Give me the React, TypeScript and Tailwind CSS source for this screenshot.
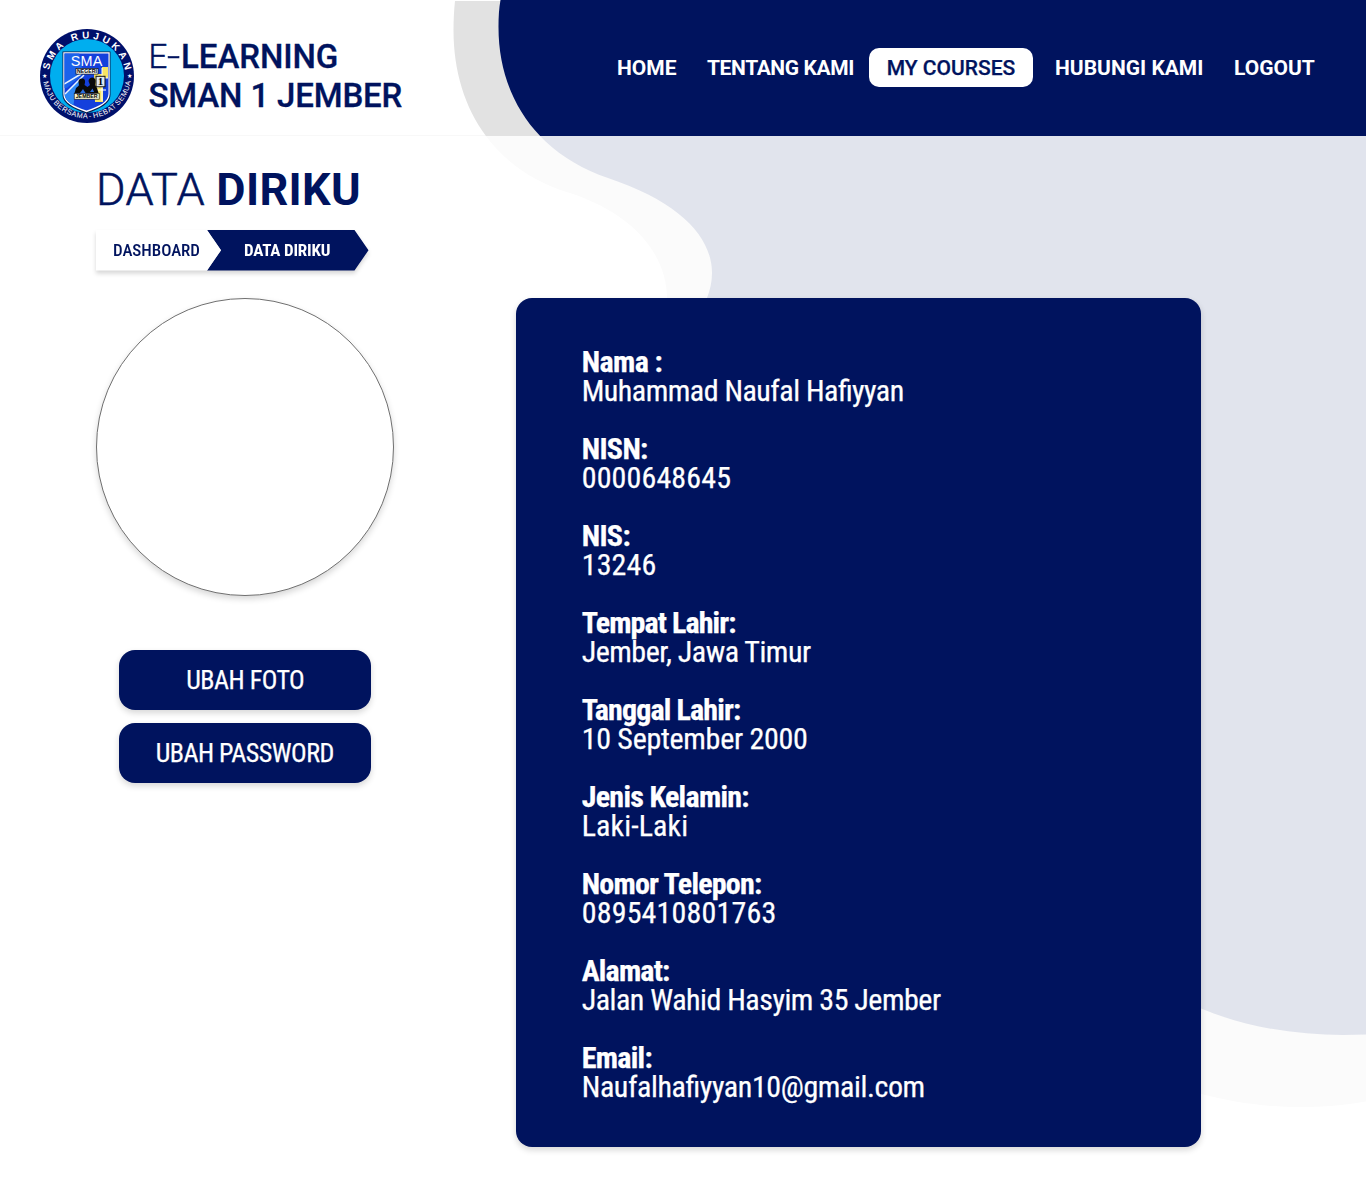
import React from "react";

const NAVY = "#00135e";

function Logo() {
  return (
    <svg className="block h-24 w-24 shrink-0" viewBox="0 0 96 96">
      <defs>
        <path id="ringTop" d="M 9.500 49 A 38.5 38.5 0 0 1 86.5 49" />
        <path id="ringBottom" d="M 3.6 46 A 44.4 44.4 0 0 0 92.4 46" />
        <clipPath id="shieldClip">
          <path d="M25.5 25.5 H69.5 V65.500 C69.5 74 60 78.500 47.500 82.500 C35 78.500 25.5 74 25.5 65.500 Z" />
        </clipPath>
      </defs>
      <circle cx="48" cy="48" r="47" fill="#00106b" />
      <circle cx="48" cy="48" r="37" fill="#00aeef" />
      <path d="M23.500 23.500 H71.500 V66.500 C71.500 76 61 80.500 47.500 85.500 C34 80.500 23.500 76 23.500 66.500 Z" fill="#0b1a4a" />
      <path d="M24.300 24.300 H70.700 V66 C70.700 75 60 79.800 47.500 84.300 C35 79.800 24.300 75 24.300 66 Z" fill="#fff" />
      <g clipPath="url(#shieldClip)">
        <rect x="24" y="24" width="48" height="62" fill="#1440dc" />
        <path d="M24 24 H40 L44 46 L28 60 H24 Z" fill="#1b62ea" />
        <path d="M24 68 L44 47 L36 66 L34 80 Z" fill="#2b86f5" />
        <path d="M25 56 L42 46 M26 66 L45 47" stroke="#e8f2ff" strokeWidth="1.500" />
        <path d="M55 46 H63 V39 H69 V50 H64 V74 H56 Z" fill="#f7e463" />
        <path d="M59 47 V60 M63 40 V73 M56 50 H69 M56 62 H67" stroke="#fff" strokeWidth="1" />
      </g>
      <text x="47.500" y="38" textAnchor="middle" fontSize="14.400" fill="#fff" fontFamily="Liberation Sans" textLength="31.500">SMA</text>
      <rect x="37" y="40.500" width="22" height="5.600" fill="#fff" stroke="#111" strokeWidth=".7" />
      <text x="48" y="45.200" textAnchor="middle" fontSize="5" fontWeight="700" fontFamily="Liberation Sans" textLength="20" lengthAdjust="spacingAndGlyphs">NEGERI</text>
      <rect x="57" y="48.300" width="9" height="10.500" fill="#dfe7ee" stroke="#111" strokeWidth="1" />
      <text x="61.500" y="57.300" textAnchor="middle" fontSize="11" fontWeight="700" fontFamily="Liberation Serif">1</text>
      <path d="M35.500 65 L37 60 L40 57.500 L39.500 54 Q39.500 50.500 43 50.500 Q46.500 50.500 46 54.500 L45.500 57 L48.500 59 L51 57 L49.500 53 Q50 49.500 53.500 49.500 Q57 50 56.500 54 L56 57 L58 60 L59.500 65 Z" fill="#0a0a0a" />
      <path d="M41 65 L44 61 L46.500 65 Z M51 64 L53.500 60.500 L55 64 Z" fill="#2b6fe0" />
      <rect x="35.200" y="65.600" width="25" height="5.600" fill="#f6f3cf" stroke="#111" strokeWidth=".6" />
      <text x="47.700" y="70.200" textAnchor="middle" fontSize="4.800" fontWeight="700" fontFamily="Liberation Sans" textLength="22" lengthAdjust="spacingAndGlyphs">JEMBER</text>
      <text fill="#fff" fontSize="9.800" fontWeight="700" fontFamily="Liberation Sans">
        <textPath href="#ringTop" startOffset="7" textLength="107">SMA RUJUKAN</textPath>
      </text>
      <text fill="#fff" fontSize="7.300" fontFamily="Liberation Sans" wordSpacing="-1">
        <textPath href="#ringBottom" startOffset="8" textLength="124">MAJU BERSAMA - HEBAT SEMUA</textPath>
      </text>
      <text x="3" y="49.500" fontSize="6" fill="#fff" fontFamily="DejaVu Sans">★</text>
      <text x="88" y="49.500" fontSize="6" fill="#fff" fontFamily="DejaVu Sans">★</text>
    </svg>
  );
}

const darkPath =
  "M500.500 0 C499 8 498.500 17 498.500 27 C498.500 100 540 155 608 178 C680 202 712 237 712 273 C712 282 710 290 707 298 V700 L1201 1008.500 C1245 1027 1295 1035 1343 1035 L1366 1034.500 V0 Z";
const lightPath =
  "M455 1 C454 10 453.500 20 453.500 30 C453.500 110 496 171 570 193 C640 216 667 260 667 298 V800 L1201 1094 C1232 1102 1265 1107 1300 1107 Q1335 1107 1366 1101.500 V1 Z";

function Waves({ light, dark }: { light: string; dark: string }) {
  return (
    <svg className="absolute left-0 top-0 -z-10" width="1366" height="1195" viewBox="0 0 1366 1195">
      <path d={lightPath} fill={light} />
      <path d={darkPath} fill={dark} />
    </svg>
  );
}

const fields = [
  { label: "Nama :", labelClass: "tracking-[-0.6px]", value: "Muhammad Naufal Hafiyyan", valueClass: "tracking-[-0.51px]" },
  { label: "NISN:", labelClass: "tracking-[-0.65px]", value: "0000648645", valueClass: "tracking-[0.13px]" },
  { label: "NIS:", labelClass: "tracking-[-0.65px]", value: "13246", valueClass: "tracking-[0.13px]" },
  { label: "Tempat Lahir:", labelClass: "tracking-[-0.9px]", value: "Jember, Jawa Timur", valueClass: "tracking-[-0.5px]" },
  { label: "Tanggal Lahir:", labelClass: "tracking-[-0.84px]", value: "10 September 2000", valueClass: "tracking-[-0.28px]" },
  { label: "Jenis Kelamin:", labelClass: "tracking-[-0.7px]", value: "Laki-Laki", valueClass: "tracking-[0.1px]" },
  { label: "Nomor Telepon:", labelClass: "tracking-[-0.76px]", value: "0895410801763", valueClass: "tracking-[0.17px]" },
  { label: "Alamat:", labelClass: "tracking-[-0.8px]", value: "Jalan Wahid Hasyim 35 Jember", valueClass: "tracking-[-0.49px]" },
  { label: "Email:", labelClass: "tracking-[-0.7px]", value: "Naufalhafiyyan10@gmail.com", valueClass: "tracking-[-0.4px]" },
];

export default function App() {
  return (
    <div className="relative isolate h-[1195px] w-[1366px] overflow-hidden bg-white font-['Roboto'] text-[#00135e]">
      <Waves light="#fbfbfb" dark="#e1e4ed" />
      <header className="relative isolate flex h-[136px] items-start overflow-hidden bg-white pl-[39px] pt-7">
        <div className="absolute inset-x-0 bottom-0 -z-20 h-px bg-[#f8f8f8]" />
        <Waves light="#e2e2e2" dark={NAVY} />
        <Logo />
        <div className="ml-[13.5px] mt-[9px] w-[468.5px] whitespace-nowrap text-[33px] font-medium leading-[39px] tracking-[-0.08px] [-webkit-text-stroke:0.3px]">
          <div className="flex">
            <span className="font-light [-webkit-text-stroke:0.5px]">E</span>
            <span className="mr-[4.5px] origin-left scale-x-[1.4] font-light [-webkit-text-stroke:0.5px]">-</span>
            <span>LEARNING</span>
          </div>
          <div className="tracking-[-0.15px]">SMAN 1 JEMBER</div>
        </div>
        <nav className="mt-5 flex h-[39px] items-center whitespace-nowrap pt-0.5 text-[21px] font-bold text-white">
          <a className="w-[90px]">HOME</a>
          <a className="w-[162px] tracking-[-0.4px]">TENTANG KAMI</a>
          <a className="-mt-0.5 flex h-[39px] w-[164px] items-center justify-center rounded-[10px] bg-white pt-0.5 font-medium text-[#00135e] [-webkit-text-stroke:0.25px]">MY COURSES</a>
          <a className="ml-[22px] w-[179px]">HUBUNGI KAMI</a>
          <a>LOGOUT</a>
        </nav>
      </header>
      <main className="flex pl-24">
        <section className="w-[420px]">
          <h1 className="mt-[27px] h-[67px] whitespace-nowrap text-[45px] font-light leading-[53px] tracking-[0.35px] [-webkit-text-stroke:0.6px]">DATA <b className="font-bold [-webkit-text-stroke:0px]">DIRIKU</b></h1>
          <div className="flex h-[40.5px] text-[17px] font-medium tracking-[-0.05px] drop-shadow-[0_3px_2px_rgba(0,0,0,0.16)] [font-stretch:75%]">
            <div className="z-10 flex w-[125px] items-center bg-white pl-[17px] [clip-path:polygon(0_0,111px_0,125px_50%,111px_100%,0_100%)]">DASHBOARD</div>
            <div className="-ml-[14px] flex w-[161.5px] items-center bg-[#00135e] pl-[37px] font-bold tracking-[-0.18px] text-white [clip-path:polygon(0_0,147.5px_0,100%_50%,147.5px_100%,0_100%,14px_50%)]">DATA DIRIKU</div>
          </div>
          <div className="mt-[27.5px] h-[298px] w-[298px] rounded-full border border-[#707070] bg-white shadow-[0_3px_6px_rgba(0,0,0,0.16)]" />
          <div className="ml-[23px] mt-[54px] flex w-[251.500px] flex-col gap-[13px] text-[26px] tracking-[-0.5px] text-white [-webkit-text-stroke:0.25px] [font-stretch:75%]">
            <button className="h-[60px] rounded-2xl bg-[#00135e] pl-px pt-px shadow-[0_3px_6px_rgba(0,0,0,0.16)]">UBAH FOTO</button>
            <button className="h-[60px] rounded-2xl bg-[#00135e] pt-px shadow-[0_3px_6px_rgba(0,0,0,0.16)]">UBAH PASSWORD</button>
          </div>
        </section>
        <section className="mt-[162px] h-[849px] w-[684.500px] rounded-2xl bg-[#00135e] pl-[65.7px] pt-[49px] text-[30px] leading-[29px] text-white shadow-[0_3px_6px_rgba(0,0,0,0.16)] [-webkit-text-stroke:0.25px] [font-feature-settings:'liga'_1] [font-stretch:75%]">
          {fields.map((field) => (
            <div key={field.label} className="mb-[29px]">
              <div className={`font-bold ${field.labelClass}`}>{field.label}</div>
              <div className={field.valueClass}>{field.value}</div>
            </div>
          ))}
        </section>
      </main>
    </div>
  );
}
